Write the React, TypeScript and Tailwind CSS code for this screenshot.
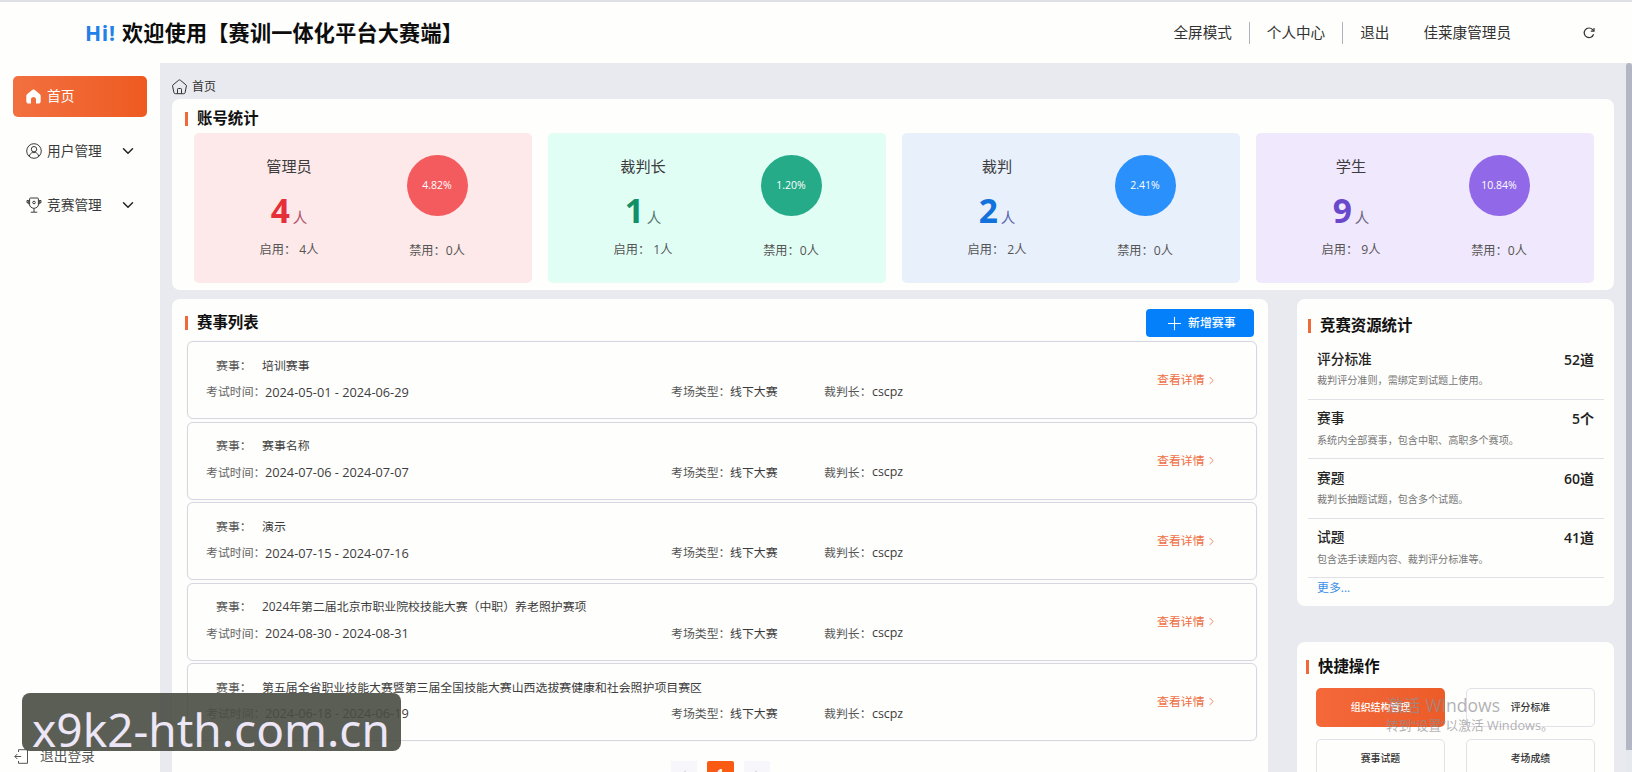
import { LuChevronDown, LuChevronRight, LuPlus } from "react-icons/lu";
import clsx from "clsx";

const stats = [
  { title: "管理员", count: 4, percent: "4.82%", card: "bg-[#fde9e9]", text: "text-[#e5303a]", unit: "text-[#b0506a]", circle: "bg-[#f45b5f]" },
  { title: "裁判长", count: 1, percent: "1.20%", card: "bg-[#e1fef5]", text: "text-[#119068]", unit: "text-[#557a70]", circle: "bg-[#25ab88]" },
  { title: "裁判", count: 2, percent: "2.41%", card: "bg-[#e8f0fc]", text: "text-[#1272dc]", unit: "text-[#5a64b0]", circle: "bg-[#2a90fc]" },
  { title: "学生", count: 9, percent: "10.84%", card: "bg-[#f0e8fc]", text: "text-[#6a48cc]", unit: "text-[#6c6480]", circle: "bg-[#9068e8]" },
];

const matches = [
  { name: "培训赛事", date: "2024-05-01 - 2024-06-29" },
  { name: "赛事名称", date: "2024-07-06 - 2024-07-07" },
  { name: "演示", date: "2024-07-15 - 2024-07-16" },
  { name: "2024年第二届北京市职业院校技能大赛（中职）养老照护赛项", date: "2024-08-30 - 2024-08-31" },
  { name: "第五届全省职业技能大赛暨第三届全国技能大赛山西选拔赛健康和社会照护项目赛区", date: "2024-06-18 - 2024-06-19" },
];

const resources = [
  { name: "评分标准", value: "52道", desc: "裁判评分准则，需绑定到试题上使用。" },
  { name: "赛事", value: "5个", desc: "系统内全部赛事，包含中职、高职多个赛项。" },
  { name: "赛题", value: "60道", desc: "裁判长抽题试题，包含多个试题。" },
  { name: "试题", value: "41道", desc: "包含选手读题内容、裁判评分标准等。" },
];

const actions = ["组织结构管理", "评分标准", "赛事试题", "考场成绩"];

const HomeSolid = () => (
  <svg width="15" height="15" viewBox="0 0 15 15" fill="currentColor">
    <path d="M7.5.4c.4 0 .7.1 1 .4l5.200 4.300c.7.600 1 1.200 1 2v4.800c0 1.600-.9 2.600-2.400 2.600H10V10.300c0-1.400-1-2.400-2.500-2.400S5 8.900 5 10.300v4.200H2.700C1.200 14.500.3 13.500.3 11.900V7.100c0-.8.3-1.400 1-2L6.500.8c.3-.3.6-.4 1-.4Z" />
  </svg>
);

const HomeOutline = () => (
  <svg width="15" height="16" viewBox="0 0 15 16" fill="none" stroke="currentColor" strokeWidth="1" strokeLinejoin="round">
    <path d="M6.700 1.200.9 6c-.3.300-.4.6-.3 1l1.300 6.500c.1.800.6 1.200 1.400 1.200h8.400c.8 0 1.300-.4 1.400-1.200L14.400 7c.1-.4 0-.7-.3-1L8.300 1.200c-.5-.4-1.100-.4-1.600 0Z" />
    <path d="M5.500 14.500v-4.200c0-.5.300-.8.800-.8h2.400c.5 0 .8.3.8.8v4.200" />
  </svg>
);

const UserIcon = () => (
  <svg width="16" height="16" viewBox="0 0 16 16" fill="none" stroke="currentColor" strokeWidth="1">
    <circle cx="8" cy="8" r="7.300" />
    <circle cx="8" cy="6.200" r="2.700" />
    <path d="M3.300 13.300c.4-2.200 1.900-3.400 3-3.700h3.400c1.100.3 2.600 1.500 3 3.700" />
  </svg>
);

const TrophyIcon = () => (
  <svg width="16" height="16" viewBox="0 0 16 16" fill="none" stroke="currentColor" strokeWidth="1">
    <path d="M4.500 1h7c.6 0 .9.3.9.8v6c0 1.700-1.700 3.100-4.400 3.600-2.700-.5-4.400-1.900-4.400-3.600v-6c0-.5.300-.8.900-.8Z" />
    <path d="M3.500 3.500H2.300v3.300h1.300M2.300 3.500H1v2.200h1.300M12.500 3.500h1.200v3.300h-1.300M13.700 3.500H15v2.200h-1.300M8 11.500V15M4.800 15.200h6.400" />
    <circle cx="8" cy="5.500" r="1.300" />
  </svg>
);

const ExitIcon = () => (
  <svg width="15" height="15" viewBox="0 0 15 15" fill="none" stroke="currentColor" strokeWidth="1">
    <path d="M4.500 3V.7h9v13.600h-9V12M.8 7.500h6.400M3.300 5 .8 7.500 3.300 10" />
  </svg>
);

const RefreshIcon = () => (
  <svg width="12" height="12" viewBox="0 0 12 12" fill="none" stroke="currentColor" strokeWidth="1.200">
    <path d="M10.600 7.200A4.800 4.800 0 1 1 9.600 2.600l1.200 1.300" />
    <path d="M11 .9v3.200H7.800" />
  </svg>
);

const SectionTitle = ({ children }: { children: string }) => (
  <div className="flex h-5 items-center text-[15.4px] font-bold text-[#111]">
    <span className="mr-[9px] h-[14px] w-[3px] bg-[#ee6a3c]" />
    {children}
  </div>
);

const Header = () => (
  <header className="flex h-[63px] shrink-0 items-center border-t-2 border-[#dfe0e6] bg-[#fefefc] pl-[85px] text-[14.6px] text-[#333]">
    <h1 className="flex text-[21.1px] font-bold tracking-[0.22px] text-[#0c0c0c]">
      <span className="w-[37px] text-[#2380e8] tracking-[0.7px]">Hi!</span>
      欢迎使用【赛训一体化平台大赛端】
    </h1>
    <nav className="ml-auto flex items-center">
      <span>全屏模式</span>
      <i className="mx-[17px] h-[22px] w-px bg-[#aeb2bb]" />
      <span>个人中心</span>
      <i className="mx-[17px] h-[22px] w-px bg-[#aeb2bb]" />
      <span>退出</span>
      <span className="ml-[34px]">佳莱康管理员</span>
      <span className="mr-[37px] ml-[72px]">
        <RefreshIcon />
      </span>
    </nav>
  </header>
);

const Sidebar = () => (
  <aside className="flex w-[160px] shrink-0 flex-col bg-[#fefefc] pt-[13px] text-[13.7px] text-[#3a3a3a]">
    <div className="mx-[13px] flex h-[41px] items-center rounded-[5px] bg-linear-to-r from-[#f2703f] to-[#ee5a20] pl-[13px] text-white">
      <HomeSolid />
      <span className="ml-[6px]">首页</span>
    </div>
    <div className="mt-[14px] flex h-[40px] items-center pl-[26px]">
      <UserIcon />
      <span className="ml-[5px]">用户管理</span>
      <LuChevronDown size={18} className="ml-[17px] text-[#222]" />
    </div>
    <div className="mt-[14px] flex h-[40px] items-center pl-[26px]">
      <TrophyIcon />
      <span className="ml-[5px]">竞赛管理</span>
      <LuChevronDown size={18} className="ml-[17px] text-[#222]" />
    </div>
    <div className="mt-auto mb-px flex h-[30px] items-center pl-[14px] text-[#555]">
      <ExitIcon />
      <span className="ml-[11px]">退出登录</span>
    </div>
  </aside>
);

const AccountStats = () => (
  <section className="h-[191px] rounded-lg bg-[#fefefc] pt-[10px] pl-[13px]">
    <SectionTitle>账号统计</SectionTitle>
    <div className="mt-[4px] mr-[20px] ml-[9px] grid h-[150px] grid-cols-4 gap-4">
      {stats.map((item) => (
        <div key={item.title} className={clsx("flex rounded-[5px] text-[12.2px] text-[#555]", item.card)}>
          <div className="ml-[45px] flex w-[100px] flex-col items-center pt-[21px]">
            <div className="h-6 text-[15.2px] leading-6 text-[#3c3c3c]">{item.title}</div>
            <div className="mt-[10px] flex h-[44px] items-baseline leading-[44px]">
              <span className={clsx("text-[33.5px] font-bold", item.text)}>{item.count}</span>
              <span className={clsx("ml-[3px] text-[14.5px]", item.unit)}>人</span>
            </div>
            <div className="mt-[8px] h-5 leading-5 whitespace-pre">启用： {item.count}人</div>
          </div>
          <div className="ml-[48px] flex w-[100px] flex-col items-center pt-[22px]">
            <div className={clsx("flex size-[61px] items-center justify-center rounded-full text-[10.5px] text-white", item.circle)}>
              {item.percent}
            </div>
            <div className="mt-[25px] h-5 leading-5">禁用：0人</div>
          </div>
        </div>
      ))}
    </div>
  </section>
);

const MatchList = () => (
  <section className="w-[1096px] shrink-0 rounded-t-lg bg-[#fefefc] pt-[10px] pl-[13px]">
    <div className="flex h-[28px] items-center justify-between pr-[14px]">
      <SectionTitle>赛事列表</SectionTitle>
      <button className="flex h-[28px] w-[108px] items-center rounded bg-[#0480fb] pl-[18px] text-[11.9px] font-medium text-white">
        <LuPlus size={21} strokeWidth={1.2} />
        <span className="ml-[3px]">新增赛事</span>
      </button>
    </div>
    <div className="mt-[4.400px] mr-[11px] ml-[2px] flex flex-col gap-[2.400px]">
      {matches.map((match) => (
        <div
          key={match.name}
          className="flex h-[78px] items-center rounded-[6px] border border-[#d8d6e0] text-[11.9px] whitespace-nowrap text-[#3c3c3c] shadow-[0_0_1px_#dcdae2]"
        >
          <div className="w-[969px]">
            <div className="flex h-[26px] items-center">
              <span className="ml-[28px] w-[46px] text-[#555]">赛事：</span>
              <span>{match.name}</span>
            </div>
            <div className="mb-[2px] flex h-[27px] items-center">
              <span className="ml-[18px] w-[59px] text-[#666]">考试时间：</span>
              <span className="w-[406px] text-[12.75px]">{match.date}</span>
              <span className="w-[59px] text-[#555]">考场类型：</span>
              <span className="w-[94px]">线下大赛</span>
              <span className="w-[48px] text-[#555]">裁判长：</span>
              <span className="text-[12.4px]">cscpz</span>
            </div>
          </div>
          <div className="flex items-center text-[#ee6e44]">
            查看详情
            <LuChevronRight size={13} strokeWidth={1.5} />
          </div>
        </div>
      ))}
    </div>
    <div className="mt-[20px] ml-[486px] flex gap-[10px] text-xs">
      <span className="flex h-[27px] w-[26px] items-center justify-center bg-[#f7f6fb] text-[#c0c0cc]">
        <LuChevronRight size={12} className="rotate-180" />
      </span>
      <span className="flex h-[27px] w-[27px] items-center justify-center rounded-[2px] bg-[#fb5a12] font-bold text-white">1</span>
      <span className="flex h-[27px] w-[26px] items-center justify-center bg-[#f7f6fb] text-[#c0c0cc]">
        <LuChevronRight size={12} />
      </span>
    </div>
  </section>
);

const ResourceStats = () => (
  <section className="h-[307px] rounded-lg bg-[#fefefc] pt-[17px] pr-[10px] pl-[11px]">
    <SectionTitle>竞赛资源统计</SectionTitle>
    <div className="mt-[4px]">
      {resources.map((item) => (
        <div key={item.name} className="h-[59.500px] border-b border-[#e2e1e8] pt-[9px] pr-[10px] pl-[9px]">
          <div className="flex h-5 items-center justify-between text-[13.7px] font-medium text-[#222]">
            <span>{item.name}</span>
            <span className="text-[14px] font-semibold">{item.value}</span>
          </div>
          <div className="mt-[2px] h-[18px] text-[10.1px] leading-[18px] text-[#777]">{item.desc}</div>
        </div>
      ))}
    </div>
    <div className="pl-[9px] text-[11.9px] leading-[19px] text-[#3a8fe8]">更多...</div>
  </section>
);

const QuickActions = () => (
  <section className="relative mt-[36px] h-[160px] rounded-t-lg bg-[#fefefc] pt-[15px] pl-[9px]">
    <SectionTitle>快捷操作</SectionTitle>
    <div className="mt-[11px] ml-[10px] grid w-[279px] grid-cols-2 gap-x-[21px] gap-y-[12px]">
      {actions.map((action, index) => (
        <div
          key={action}
          className={clsx(
            "flex h-[39px] items-center justify-center rounded-[5px] text-[9.9px] font-medium",
            index === 0 ? "bg-linear-to-r from-[#f4683a] to-[#ec5c28] text-white" : "border border-[#e4e0ea] text-[#333]"
          )}
        >
          {action}
        </div>
      ))}
    </div>
    <div className="pointer-events-none absolute top-[50px] left-[89px] whitespace-nowrap text-[#8f8f94]/70">
      <div className="text-[17.500px] leading-[26px]">激活 Windows</div>
      <div className="text-[12.700px] leading-[14px]">转到“设置”以激活 Windows。</div>
    </div>
  </section>
);

const App = () => {
  return (
    <div className="relative flex h-[772px] w-[1632px] flex-col overflow-hidden font-['Open_Sans','Noto_Sans_CJK_SC',sans-serif]">
      <Header />
      <div className="flex min-h-0 flex-1">
        <Sidebar />
        <main className="min-w-0 flex-1 overflow-hidden bg-[#e9eaef] pr-[12px] pl-[12px]">
          <div className="flex h-[36px] items-center pt-[11px] text-xs text-[#333]">
            <HomeOutline />
            <span className="ml-[5px]">首页</span>
          </div>
          <AccountStats />
          <div className="mt-[9px] flex h-[500px] gap-[29px]">
            <MatchList />
            <div className="w-[317px]">
              <ResourceStats />
              <QuickActions />
            </div>
          </div>
        </main>
        <div className="w-[6px] bg-[#e6e9ee]">
          <div className="h-[687px] rounded-t-[3px] bg-[#b3b7c4]" />
        </div>
      </div>
      <div className="absolute top-[693px] left-[22px] flex h-[58px] w-[379px] items-center rounded-lg bg-[#484c42]/90 pl-[10px] font-['Noto_Sans',sans-serif] text-[46px] leading-none text-[#ece6f6]">
        <span className="mt-[14px]">x9k2-hth.com.cn</span>
      </div>
    </div>
  );
};

export default App;
